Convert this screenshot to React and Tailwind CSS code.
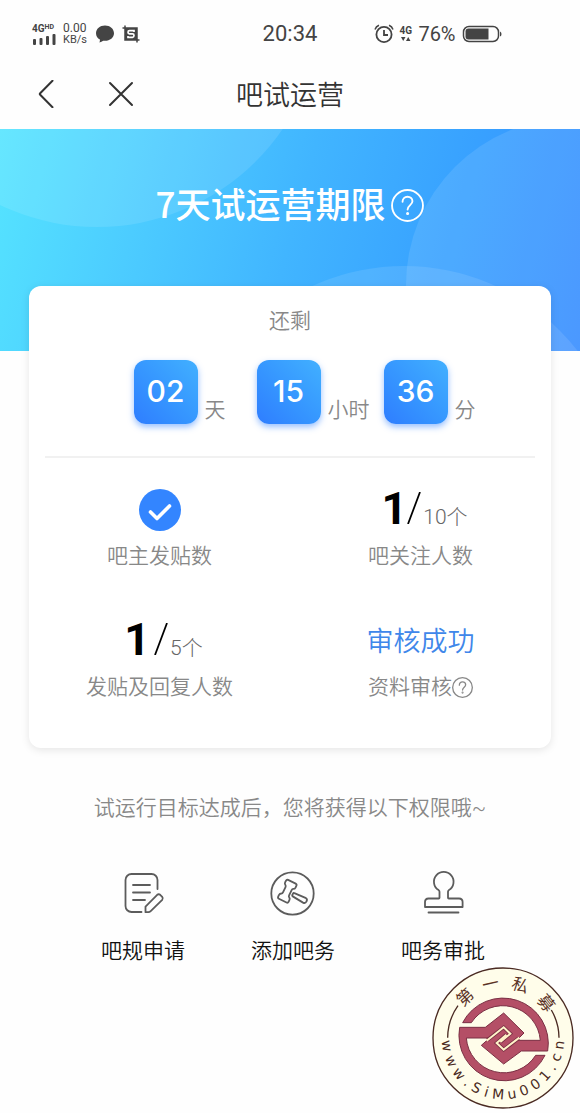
import React from "react";

const countdown = [
  { value: "02", unit: "天", spacing: "mr-[31px]" },
  { value: "15", unit: "小时", spacing: "mr-[14px]" },
  { value: "36", unit: "分", spacing: "" },
];

const HelpIcon = ({ className, strokeWidth }) => (
  <svg
    viewBox="0 0 32 32"
    className={className}
    fill="none"
    stroke="currentColor"
    strokeWidth={strokeWidth}
    strokeLinecap="round"
  >
    <circle cx="16" cy="16" r="15" />
    <path d="M11.2 12.4c0-3 2-4.9 4.8-4.9s4.8 1.8 4.8 4.4c0 3.6-4.7 3.9-4.7 8" />
    <circle cx="16.1" cy="23.8" r="0.6" fill="currentColor" />
  </svg>
);

const RulesIcon = () => (
  <svg viewBox="0 0 48 48" className="size-12" fill="none" stroke="#5c5c5c" strokeWidth="1.8" strokeLinecap="round" strokeLinejoin="round">
    <path d="M22.5 43H12.5a6 6 0 0 1-6-6V11a6 6 0 0 1 6-6h20a6 6 0 0 1 6 6v9" />
    <path d="M14 16h17M14 23.5h17M14 31h12" />
    <path d="M26.5 43.2v-5.6L38.2 25.8q1.5-1.2 3 0l2 2q1.3 1.5 0 3L31.7 42.2q-1 1-2.4 1z" />
  </svg>
);

const GavelIcon = () => (
  <svg viewBox="0 0 48 48" className="size-12" fill="none" stroke="#5c5c5c" strokeWidth="1.8" strokeLinecap="round" strokeLinejoin="round">
    <circle cx="23.5" cy="24.5" r="21.2" />
    <path
      transform="translate(18.3 22.2) rotate(26)"
      d="M-4.2-10.5H4.2q1.6 0 1.6 1.8v1.8q0 1.5-1.4 2.2q-1 .6-1 1.8v5.8q0 1.2 1 1.8q1.4.7 1.4 2.2v1.8q0 1.8-1.6 1.8h-8.4q-1.6 0-1.6-1.8v-1.8q0-1.5 1.4-2.2q1-.6 1-1.8v-5.8q0-1.2-1-1.8q-1.4-.7-1.4-2.2v-1.8q0-1.8 1.6-1.8z"
    />
    <path transform="translate(25 26) rotate(27)" d="M-.5-1.8L11.5-2.7q2.6 0 2.6 2.7t-2.6 2.7L-.5 1.8q-1 0-1-1v-1.6q0-1 1-1z" />
  </svg>
);

const StampIcon = () => (
  <svg viewBox="0 0 48 48" className="size-12" fill="none" stroke="#5c5c5c" strokeWidth="1.8" strokeLinecap="round" strokeLinejoin="round">
    <path d="M20.5 28.7v-5.9q0-1-.9-1.7a9.8 9.8 0 1 1 10.3 0q-.9.7-.9 1.7v5.9q0 .8.8.8H40q3.6 0 3.6 3.6V38H6v-4.9q0-3.6 3.6-3.6h10.1q.8 0 .8-.8z" />
    <path d="M9.5 43.5h30" />
  </svg>
);

const actions = [
  { label: "吧规申请", Icon: RulesIcon },
  { label: "添加吧务", Icon: GavelIcon },
  { label: "吧务审批", Icon: StampIcon },
];

// characters of the seal and their angle around its centre, in degrees
const sealTop = [
  ["第", -43],
  ["一", -13],
  ["私", 18],
  ["募", 51],
];
const sealBottom = [
  ["w", 82],
  ["w", 66],
  ["w", 51],
  [".", 39],
  ["S", 28],
  ["i", 17],
  ["M", 5],
  ["u", -9],
  ["0", -22],
  ["0", -35],
  ["1", -48],
  [".", -59],
  ["c", -70],
  ["n", -83],
];

const Seal = () => (
  <svg viewBox="22 35 426 426" className="size-[142px]" role="img" aria-label="第一私募">
    <circle cx="235" cy="248" r="210" fill="#fffdea" stroke="#4a2a22" strokeWidth="4" />
    <g fill="none" stroke="#4a2a22" strokeWidth="4">
      <path d="M69 247A167 167 0 0 1 100 151" />
      <path d="M403 247A167 167 0 0 0 380 164" />
    </g>
    <path
      d="M105 216H182L237 173L298 233L276 255H347A113 113 0 0 0 140 202H114A136 136 0 0 1 369 287H290L237 326L170 270L195 248H125A113 113 0 0 0 333 300H361A136 136 0 0 1 105 216Z"
      fill="#b44f66"
      stroke="#7a3044"
      strokeWidth="3"
    />
    <g fill="none" strokeLinejoin="miter">
      <path d="M188 254L237 216L257 235L227 260M282 249L237 283L216 263L245 238" stroke="#7a3044" strokeWidth="11" />
      <path d="M186 256L237 216L257 235L227 260M284 247L237 283L216 263L245 238" stroke="#fff3c9" strokeWidth="6" />
    </g>
    <g fill="#5a3226" textAnchor="middle" fontSize="50" fontFamily="'Noto Sans CJK SC', sans-serif">
      {sealTop.map(([char, angle]) => (
        <text key={char} x="235" y="99" transform={`rotate(${angle} 235 248)`}>
          {char}
        </text>
      ))}
    </g>
    <g fill="#4a2a22" textAnchor="middle" fontSize="42" fontFamily="'DejaVu Sans', sans-serif">
      {sealBottom.map(([char, angle]) => (
        <text key={angle} x="235" y="432" transform={`rotate(${angle} 235 248)`}>
          {char}
        </text>
      ))}
    </g>
  </svg>
);

const StatusBar = () => (
  <div className="grid h-[59px] grid-cols-[1fr_auto_1fr] items-center pt-[9px] text-[#444]">
    <div className="flex items-center pl-8">
      <div className="w-[26px]">
        <div className="flex items-start text-[10px] leading-[10px] font-bold">
          4G<span className="text-[7px] leading-[7px]">HD</span>
        </div>
        <svg viewBox="0 0 24 11" className="h-[11px] w-6" fill="currentColor">
          <rect x="1" y="5" width="3" height="6" rx="1" />
          <rect x="7.5" y="4" width="3" height="7" rx="1" />
          <rect x="14" y="2" width="3" height="9" rx="1" />
          <rect x="20.5" y="0" width="3" height="11" rx="1" />
        </svg>
      </div>
      <div className="ml-[5px] w-[26px] text-[12px] leading-[11px]">
        0.00
        <div className="text-[11px] leading-[11px]">KB/s</div>
      </div>
      <svg viewBox="0 0 20 20" className="ml-[6px] size-5" fill="currentColor">
        <path d="M10 1.5c5 0 9 3.4 9 7.7s-4 7.6-9 7.6q-1 0-1.8-.1q-1.6 1.4-3.8 1.7q.7-1.3.5-2.9C2.5 14.2 1 12 1 9.2c0-4.3 4-7.7 9-7.7z" />
      </svg>
      <svg viewBox="0 0 18 18" className="ml-[7px] size-[18px]">
        <path d="M3 3h12v12H3z" fill="#444" />
        <path d="M3 .5v14.5h14.5M.5 3H15v14.5" fill="none" stroke="#444" strokeWidth="1.5" />
        <path d="M12 7V5.7H7.5Q6 5.7 6 7.2T7.5 8.9h3Q12 8.9 12 10.5T10.5 12.3H6V11" fill="none" stroke="#fff" strokeWidth="1.7" />
      </svg>
    </div>
    <div className="text-[22px] leading-7">20:34</div>
    <div className="flex items-center pl-[57px]">
      <svg viewBox="0 0 20 20" className="size-5" fill="none" stroke="currentColor" strokeWidth="1.8">
        <circle cx="10" cy="10.5" r="7.6" />
        <path d="M10 6v5h4" />
        <path d="M1 5.5Q2 2.5 5 1.3M19 5.5Q18 2.5 15 1.3" strokeWidth="1.5" />
      </svg>
      <div className="ml-[5px] w-[14px] text-[10px] leading-[10px] font-bold">
        4G
        <svg viewBox="0 0 14 6" className="h-[6px] w-[14px]" fill="currentColor">
          <path d="M2 1h4.5L4.2 5zM7 5h4.5L9.2 1z" />
        </svg>
      </div>
      <div className="ml-[5px] text-[20px] leading-7">76%</div>
      <svg viewBox="0 0 40 18" className="ml-[6px] h-[18px] w-10">
        <rect x="1.5" y="1.5" width="35" height="15" rx="5.5" fill="none" stroke="#444" strokeWidth="1.5" />
        <path d="M6.5 3.5H26.5V14.5H6.5Q3.5 14.5 3.5 11.5V6.5Q3.5 3.5 6.5 3.5z" fill="#444" />
        <path d="M38 6.5Q39.5 7 39.5 9T38 11.5z" fill="#444" />
      </svg>
    </div>
  </div>
);

const NavBar = () => (
  <header className="grid h-[70px] grid-cols-[1fr_auto_1fr] items-center text-[#333]">
    <div className="flex items-center pl-8">
      <button type="button" aria-label="返回" className="size-7">
        <svg viewBox="0 0 28 28" className="size-7" fill="none" stroke="currentColor" strokeWidth="2" strokeLinecap="round" strokeLinejoin="round">
          <path d="M20.5 0.8L8.2 13.2q-.8.8 0 1.6L20.5 27.2" />
        </svg>
      </button>
      <button type="button" aria-label="关闭" className="ml-[47px] size-7">
        <svg viewBox="0 0 28 28" className="size-7" fill="none" stroke="currentColor" strokeWidth="2" strokeLinecap="round">
          <path d="M3 3l22 22M25 3L3 25" />
        </svg>
      </button>
    </div>
    <h1 className="pt-[3px] text-[27px] leading-9 font-[350]">吧试运营</h1>
  </header>
);

const Stat = ({ label, children }) => (
  <div className="flex flex-col items-center">
    <div className="flex h-12 items-center">{children}</div>
    <div className="mt-2 flex items-center text-[21px] leading-7 font-[350] text-[#888]">{label}</div>
  </div>
);

const Progress = ({ done, total, slashClass }) => (
  <div className="flex items-baseline pb-[3px] pl-2">
    <span className="text-[45px] leading-12 font-bold text-black">{done}</span>
    <svg viewBox="0 0 14 32" className={slashClass} stroke="#000" strokeWidth="1.8">
      <path d="M1 32L13 0" />
    </svg>
    <span className="ml-[2px] text-[21px] leading-7 font-light text-[#666]">{total}个</span>
  </div>
);

const App = () => {
  return (
    <div className="relative min-h-screen bg-[#fefefe] font-[Roboto,'Noto_Sans_CJK_SC',sans-serif]">
      <StatusBar />
      <NavBar />

      <section className="relative h-[222px] overflow-hidden bg-[linear-gradient(105deg,#55e4ff_0%,#4cccff_25%,#41b5ff_50%,#38a1ff_75%,#378dff_100%)] pt-12">
        <div className="absolute -top-[352px] -left-[128px] size-[450px] rounded-full bg-white/10" />
        <div className="absolute -top-[11px] -right-[160px] size-[334px] rounded-full bg-white/10" />
        <div className="absolute top-[137px] -right-[44px] size-[440px] rounded-full bg-white/10" />
        <div className="relative flex items-center justify-center text-white">
          <h2 className="font-['Noto_Sans_CJK_SC',sans-serif] text-[35px] leading-[52px] font-medium">7天试运营期限</h2>
          <button type="button" aria-label="期限说明" className="ml-[6px] pt-1">
            <HelpIcon className="size-[33px]" strokeWidth="1.8" />
          </button>
        </div>
      </section>

      <section className="relative mx-[29px] -mt-[65px] rounded-xl bg-white px-4 pt-[21px] pb-[47px] shadow-[0_2px_8px_rgba(0,0,0,0.1)]">
        <p className="text-center text-[21px] leading-7 font-[350] text-[#888]">还剩</p>

        <div className="mt-[25px] flex justify-center pl-[29px]">
          {countdown.map((item) => (
            <div key={item.unit} className={`flex items-end ${item.spacing}`}>
              <span className="flex size-16 items-center justify-center rounded-xl bg-linear-to-tr from-[#2f7dff] to-[#42b0ff] pb-[2px] font-[Inter,sans-serif] text-[30px] font-medium text-white shadow-[0_3px_6px_rgba(50,130,255,0.5)]">
                {item.value}
              </span>
              <span className="ml-[7px] text-[21px] leading-7 font-[350] text-[#888]">{item.unit}</span>
            </div>
          ))}
        </div>

        <hr className="mt-8 border-t-2 border-[#f1f1f1]" />

        <div className="-mx-4 grid grid-cols-2 gap-y-[47px] pt-7">
          <Stat label="吧主发贴数">
            <svg viewBox="0 0 42 42" className="size-[42px]">
              <circle cx="21" cy="21" r="21" fill="#3385ff" />
              <path d="M11.5 23l6.5 6.5L30.5 17" fill="none" stroke="#fff" strokeWidth="3.6" strokeLinecap="round" strokeLinejoin="round" />
            </svg>
          </Stat>
          <Stat label="吧关注人数">
            <Progress done="1" total="10" slashClass="h-8 w-[14px]" />
          </Stat>
          <Stat label="发贴及回复人数">
            <Progress done="1" total="5" slashClass="ml-1 h-8 w-[14px]" />
          </Stat>
          <Stat
            label={
              <>
                资料审核
                <button type="button" aria-label="审核说明">
                  <HelpIcon className="size-[21px]" strokeWidth="2" />
                </button>
              </>
            }
          >
            <span className="pt-[2px] text-[27px] leading-9 font-[350] text-[#3f87ea]">审核成功</span>
          </Stat>
        </div>
      </section>

      <p className="mt-[46px] text-center text-[21px] leading-7 font-[350] text-[#888]">
        试运行目标达成后，您将获得以下权限哦~
      </p>

      <div className="mt-[47px] grid grid-cols-3 pr-[62px] pl-[68px]">
        {actions.map(({ label, Icon }) => (
          <button key={label} type="button" className="flex flex-col items-center text-[21px] leading-7 font-[350] text-[#111]">
            <Icon />
            <span className="mt-5">{label}</span>
          </button>
        ))}
      </div>

      <div className="absolute right-[6px] bottom-1">
        <Seal />
      </div>
    </div>
  );
};

export default App;
